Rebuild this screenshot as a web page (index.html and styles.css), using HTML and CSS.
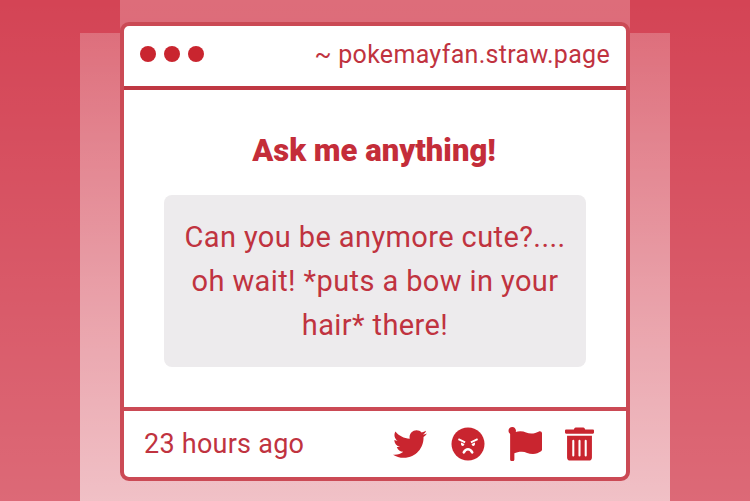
FILE: index.html
```html
<!DOCTYPE html>
<html lang="en">
<head>
  <meta charset="UTF-8" />
  <title>Ask me anything</title>
  <link rel="stylesheet" href="styles.css">
</head>
<body>
  <div class="card">
    <div class="card-top">
      <div class="dots">
        <span class="dot"></span>
        <span class="dot"></span>
        <span class="dot"></span>
      </div>
      <div class="site">~ pokemayfan.straw.page</div>
    </div>

    <div class="card-main">
      <h2>Ask me anything!</h2>
      <p class="message">Can you be anymore cute?.... oh wait! *puts a bow in your hair* there!</p>
    </div>

    <div class="card-bottom">
      <div class="time">23 hours ago</div>
      <div class="actions">
        <svg class="icon icon-twitter" viewBox="0 0 512 512"><path d="M459.37 151.716c.325 4.548.325 9.097.325 13.645 0 138.72-105.583 298.558-298.558 298.558-59.452 0-114.68-17.219-161.137-47.106 8.447.974 16.568 1.299 25.34 1.299 49.055 0 94.213-16.568 130.274-44.832-46.132-.975-84.792-31.188-98.112-72.772 6.498.974 12.995 1.624 19.818 1.624 9.421 0 18.843-1.3 27.614-3.573-48.081-9.747-84.143-51.98-84.143-102.985v-1.299c13.969 7.797 30.214 12.67 47.431 13.319-28.264-18.843-46.781-51.005-46.781-87.391 0-19.492 5.197-37.36 14.294-52.954 51.655 63.675 129.3 105.258 216.365 109.807-1.624-7.797-2.599-15.918-2.599-24.04 0-57.828 46.782-104.934 104.934-104.934 30.213 0 57.502 12.67 76.67 33.137 23.715-4.548 46.456-13.32 66.599-25.34-7.798 24.366-24.366 44.833-46.132 57.827 21.117-2.273 41.584-8.122 60.426-16.243-14.292 20.791-32.161 39.308-52.628 54.253z"/></svg>
        <svg class="icon icon-face" viewBox="0 0 34 34">
          <circle cx="17" cy="17" r="16.5"/>
          <path class="face-line" d="M7.800 11.300l6.700 3.100-.8 1.800-6.700-3.100zM26.200 11.300l-6.700 3.100.8 1.800 6.700-3.100z"/>
          <path class="face-line" d="M10 15.500l3.400 1.500c-.1 1.200-.9 1.900-1.800 1.900-1.100 0-1.900-1.300-1.600-3.400zM24 15.500l-3.400 1.500c.1 1.200.9 1.900 1.800 1.900 1.100 0 1.900-1.300 1.600-3.400z"/>
          <path class="face-mouth" d="M12.800 25.400c1.200-2.100 2.700-3.100 4.200-3.100s3 1 4.200 3.100"/>
        </svg>
        <svg class="icon icon-flag" viewBox="0 0 512 512"><path d="M349.565 98.783C295.978 98.783 251.721 64 184.348 64c-24.955 0-47.309 4.384-68.045 12.013a55.947 55.947 0 0 0 3.586-23.562C118.117 24.015 94.806 1.206 66.338.048 34.345-1.254 8 24.296 8 56c0 19.026 9.497 35.825 24 45.945V488c0 13.255 10.745 24 24 24h16c13.255 0 24-10.745 24-24v-94.4c28.311-12.064 63.582-22.122 114.435-22.122 53.588 0 97.844 34.783 165.217 34.783 48.169 0 86.667-16.294 122.505-40.858C506.84 359.452 512 349.571 512 339.045v-243.1c0-23.393-24.269-38.87-45.485-29.016-34.338 15.948-76.454 31.854-116.95 31.854z"/></svg>
        <svg class="icon icon-trash" viewBox="0 0 448 512"><path d="M32 464a48 48 0 0 0 48 48h288a48 48 0 0 0 48-48V128H32zm272-256a16 16 0 0 1 32 0v224a16 16 0 0 1-32 0zm-96 0a16 16 0 0 1 32 0v224a16 16 0 0 1-32 0zm-96 0a16 16 0 0 1 32 0v224a16 16 0 0 1-32 0zM432 32H312l-9.4-18.7A24 24 0 0 0 281.1 0H166.8a23.72 23.72 0 0 0-21.4 13.3L136 32H16A16 16 0 0 0 0 48v32a16 16 0 0 0 16 16h416a16 16 0 0 0 16-16V48a16 16 0 0 0-16-16z"/></svg>
      </div>
    </div>
  </div>
</body>
</html>
```

FILE: styles.css
```css
html, body {
  height: 100%;
}
body {
  margin: 0;
  overflow: hidden;
  font-family: Roboto, "Liberation Sans", sans-serif;
  color: #c0333f;
  background-color: #d44455;
  background-image:
    linear-gradient(to bottom, rgba(255,255,255,0.22), rgba(255,255,255,0.02)),
    linear-gradient(to bottom, rgba(255,255,255,0.22), rgba(255,255,255,0.58)),
    linear-gradient(to bottom, rgba(255,255,255,0), rgba(255,255,255,0.2));
  background-repeat: no-repeat;
  background-size: 510px 100%, 590px 468px, 100% 100%;
  background-position: 120px 0, 80px 33px, 0 0;
}
.card {
  box-sizing: border-box;
  width: 510px;
  height: 459px;
  margin: 22px 0 0 120px;
  display: flex;
  flex-direction: column;
  background: #fff;
  border: 4px solid #cb4a55;
  border-radius: 9px;
}
.card-top {
  box-sizing: border-box;
  height: 64px;
  flex: none;
  display: flex;
  align-items: center;
  justify-content: space-between;
  padding: 0 16px 4px;
  border-bottom: 4px solid #bf3742;
}
.dots {
  display: flex;
  gap: 8px;
}
.dot {
  width: 16px;
  height: 16px;
  border-radius: 50%;
  background: #c9252f;
}
.site {
  font-size: 25px;
  letter-spacing: 0.3px;
}
.card-main {
  flex: 1;
  padding: 0 40px;
}
h2 {
  margin: 42px 0 25px;
  padding-right: 2px;
  font-size: 31px;
  line-height: 38px;
  font-weight: 900;
  text-align: center;
  color: #c42d39;
}
.message {
  box-sizing: border-box;
  height: 172px;
  margin: 0;
  padding: 20px 16px;
  font-size: 29px;
  line-height: 44px;
  letter-spacing: 0.4px;
  text-align: center;
  background: #edebed;
  border-radius: 8px;
}
.card-bottom {
  box-sizing: border-box;
  height: 70px;
  flex: none;
  display: flex;
  align-items: center;
  justify-content: space-between;
  padding: 0 32px 0 20px;
  border-top: 4px solid #cb4a55;
}
.time {
  font-size: 27px;
  letter-spacing: 0.25px;
}
.actions {
  display: flex;
  align-items: center;
  gap: 23px;
}
.icon {
  display: block;
  height: 34px;
  fill: #c9252f;
}
.icon-twitter {
  width: 34px;
  margin-right: 1px;
}
.icon-face {
  width: 34px;
}
.icon-flag {
  width: 34px;
}
.icon-trash {
  width: 29px;
}
.face-line {
  fill: #fff;
}
.face-mouth {
  fill: none;
  stroke: #fff;
  stroke-width: 2.6;
  stroke-linecap: round;
}
```
